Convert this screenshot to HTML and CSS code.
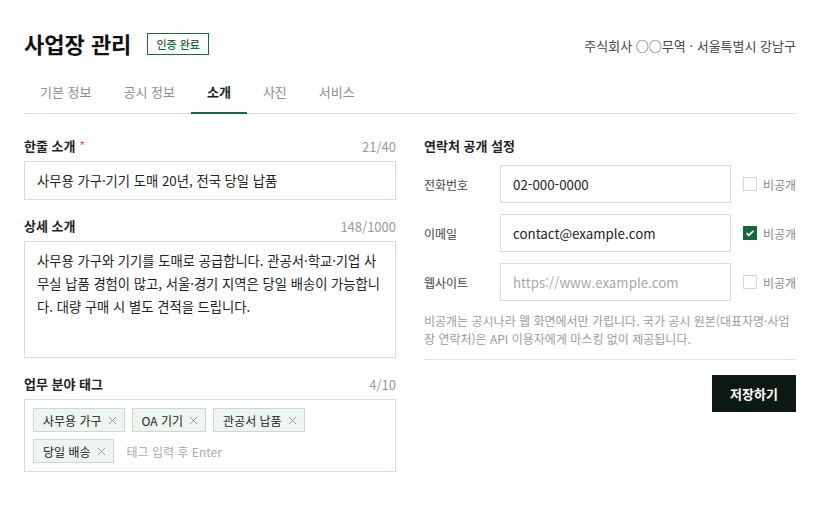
FILE: index.html
```html
<!DOCTYPE html>
<html lang="ko">
<head>
    <meta charset="UTF-8">
    <meta name="viewport" content="width=device-width, initial-scale=1.0">
    <title>사업장 관리</title>
    <link rel="stylesheet" href="styles.css">
</head>
<body>
    <div class="page">
        <header class="page-header">
            <div class="title-wrap">
                <h1 class="title">사업장 관리</h1>
                <span class="badge">인증 완료</span>
            </div>
            <div class="company">주식회사 ○○무역 · 서울특별시 강남구</div>
        </header>

        <nav class="tabs">
            <a class="tab">기본 정보</a>
            <a class="tab">공시 정보</a>
            <a class="tab active">소개</a>
            <a class="tab">사진</a>
            <a class="tab">서비스</a>
        </nav>

        <main class="content">
            <section class="col">
                <div class="field">
                    <div class="field-head">
                        <label class="label">한줄 소개 <span class="req">*</span></label>
                        <span class="count">21/40</span>
                    </div>
                    <input type="text" class="input" value="사무용 가구·기기 도매 20년, 전국 당일 납품">
                </div>

                <div class="field">
                    <div class="field-head">
                        <label class="label">상세 소개</label>
                        <span class="count">148/1000</span>
                    </div>
                    <textarea class="textarea">사무용 가구와 기기를 도매로 공급합니다. 관공서·학교·기업 사무실 납품 경험이 많고, 서울·경기 지역은 당일 배송이 가능합니다. 대량 구매 시 별도 견적을 드립니다.</textarea>
                </div>

                <div class="field">
                    <div class="field-head">
                        <label class="label">업무 분야 태그</label>
                        <span class="count">4/10</span>
                    </div>
                    <div class="tag-box">
                        <span class="tag">사무용 가구 <svg class="tag-x" viewBox="0 0 10 10" width="9" height="9"><path d="M1 1l8 8M9 1l-8 8"/></svg></span>
                        <span class="tag">OA 기기 <svg class="tag-x" viewBox="0 0 10 10" width="9" height="9"><path d="M1 1l8 8M9 1l-8 8"/></svg></span>
                        <span class="tag">관공서 납품 <svg class="tag-x" viewBox="0 0 10 10" width="9" height="9"><path d="M1 1l8 8M9 1l-8 8"/></svg></span>
                        <span class="tag">당일 배송 <svg class="tag-x" viewBox="0 0 10 10" width="9" height="9"><path d="M1 1l8 8M9 1l-8 8"/></svg></span>
                        <input type="text" class="tag-input" placeholder="태그 입력 후 Enter">
                    </div>
                </div>
            </section>

            <section class="col">
                <div class="label contact-title">연락처 공개 설정</div>

                <div class="contact-row">
                    <span class="row-label">전화번호</span>
                    <input type="text" class="input row-input" value="02-000-0000">
                    <label class="private"><span class="check"></span>비공개</label>
                </div>
                <div class="contact-row">
                    <span class="row-label">이메일</span>
                    <input type="text" class="input row-input" value="contact@example.com">
                    <label class="private"><span class="check checked"><svg viewBox="0 0 14 14" width="14" height="14"><path d="M3 7.2l2.6 2.6L11 4.4" fill="none" stroke="#fff" stroke-width="2"/></svg></span>비공개</label>
                </div>
                <div class="contact-row">
                    <span class="row-label">웹사이트</span>
                    <input type="text" class="input row-input" placeholder="https://www.example.com">
                    <label class="private"><span class="check"></span>비공개</label>
                </div>

                <p class="note">비공개는 공시나라 웹 화면에서만 가립니다. 국가 공시 원본(대표자명·사업장 연락처)은 API 이용자에게 마스킹 없이 제공됩니다.</p>

                <div class="actions">
                    <button class="save-btn">저장하기</button>
                </div>
            </section>
        </main>
    </div>
</body>
</html>
```

FILE: styles.css
```css
* {
    box-sizing: border-box;
}

body {
    margin: 0;
    font-family: "Noto Sans CJK KR", "Noto Sans", sans-serif;
    color: #222;
    background: #fff;
}

.page {
    width: 820px;
    padding: 28px 24px 0;
}

.page-header {
    display: flex;
    justify-content: space-between;
    align-items: center;
    height: 30px;
}

.title-wrap {
    display: flex;
    align-items: center;
    gap: 16px;
}

.title {
    margin: 0;
    font-size: 22px;
    font-weight: 700;
    line-height: 30px;
    color: #111;
}

.badge {
    display: inline-block;
    padding: 0 8px;
    height: 22px;
    line-height: 20px;
    border: 1px solid #17693a;
    color: #17693a;
    font-size: 11px;
    font-weight: 500;
    margin-top: 2px;
}

.company {
    font-size: 13px;
    color: #444;
    margin-top: 4px;
}

/* tabs */
.tabs {
    display: flex;
    margin-top: 14px;
    border-bottom: 1px solid #d5dfdc;
}

.tab {
    padding: 10px 16px 10px;
    font-size: 13px;
    line-height: 20px;
    color: #8a8f8c;
    border-bottom: 2px solid transparent;
    margin-bottom: -1px;
}

.tab.active {
    color: #14281c;
    font-weight: 700;
    border-bottom-color: #17693a;
}

/* columns */
.content {
    display: grid;
    grid-template-columns: 372px 372px;
    gap: 28px;
    margin-top: 22px;
}

.field {
    margin-bottom: 16px;
}

.field-head {
    display: flex;
    justify-content: space-between;
    align-items: center;
    height: 20px;
    margin-bottom: 5px;
}

.label {
    font-size: 13px;
    font-weight: 700;
    color: #222;
    line-height: 20px;
}

.req {
    color: #e06a6a;
    font-weight: 400;
}

.count {
    font-size: 13px;
    color: #999;
}

.input {
    display: block;
    width: 100%;
    height: 39px;
    padding: 0 12px;
    border: 1px solid #d3dfdb;
    border-radius: 0;
    font-family: inherit;
    font-size: 13.3px;
    color: #222;
    outline: none;
}

.input::placeholder {
    color: #a5a9a7;
}

.textarea {
    display: block;
    width: 100%;
    height: 117px;
    padding: 7px 12px;
    border: 1px solid #d3dfdb;
    font-family: inherit;
    font-size: 13.3px;
    line-height: 23px;
    color: #222;
    word-break: break-all;
    resize: none;
    outline: none;
}

.tag-box {
    display: flex;
    flex-wrap: wrap;
    gap: 7px;
    padding: 8px;
    border: 1px solid #d3dfdb;
}

.tag {
    display: inline-flex;
    align-items: center;
    gap: 6px;
    height: 24px;
    padding: 0 7px 0 9px;
    background: #eef4f0;
    border: 1px solid #c9dad1;
    font-size: 12px;
    color: #222;
}

.tag-x {
    stroke: #9a9a9a;
    stroke-width: 1.1;
    fill: none;
}

.tag-input {
    flex: 1;
    min-width: 120px;
    height: 24px;
    padding: 0 6px;
    border: none;
    font-family: inherit;
    font-size: 12px;
    outline: none;
}

.tag-input::placeholder {
    color: #aaa;
}

/* contact settings */
.contact-title {
    margin-bottom: 9px;
}

.contact-row {
    display: flex;
    align-items: center;
    margin-bottom: 11px;
}

.row-label {
    width: 76px;
    font-size: 12px;
    color: #444;
}

.row-input {
    width: 231px;
    height: 38px;
}

.private {
    display: flex;
    align-items: center;
    gap: 6px;
    margin-left: auto;
    font-size: 12px;
    color: #888;
}

.check {
    display: inline-flex;
    align-items: center;
    justify-content: center;
    width: 14px;
    height: 14px;
    border: 1px solid #cfdcd7;
    background: #fff;
}

.check.checked {
    background: #17693a;
    border-color: #17693a;
}

.note {
    margin: 3px 0 0;
    padding-bottom: 11px;
    font-size: 12px;
    line-height: 18px;
    color: #9a9d9b;
    border-bottom: 1px solid #dde4e1;
}

.actions {
    display: flex;
    justify-content: flex-end;
    margin-top: 15px;
}

.save-btn {
    width: 84px;
    height: 37px;
    border: none;
    background: #0d1a13;
    color: #fff;
    font-family: inherit;
    font-size: 13px;
    font-weight: 700;
}
```
